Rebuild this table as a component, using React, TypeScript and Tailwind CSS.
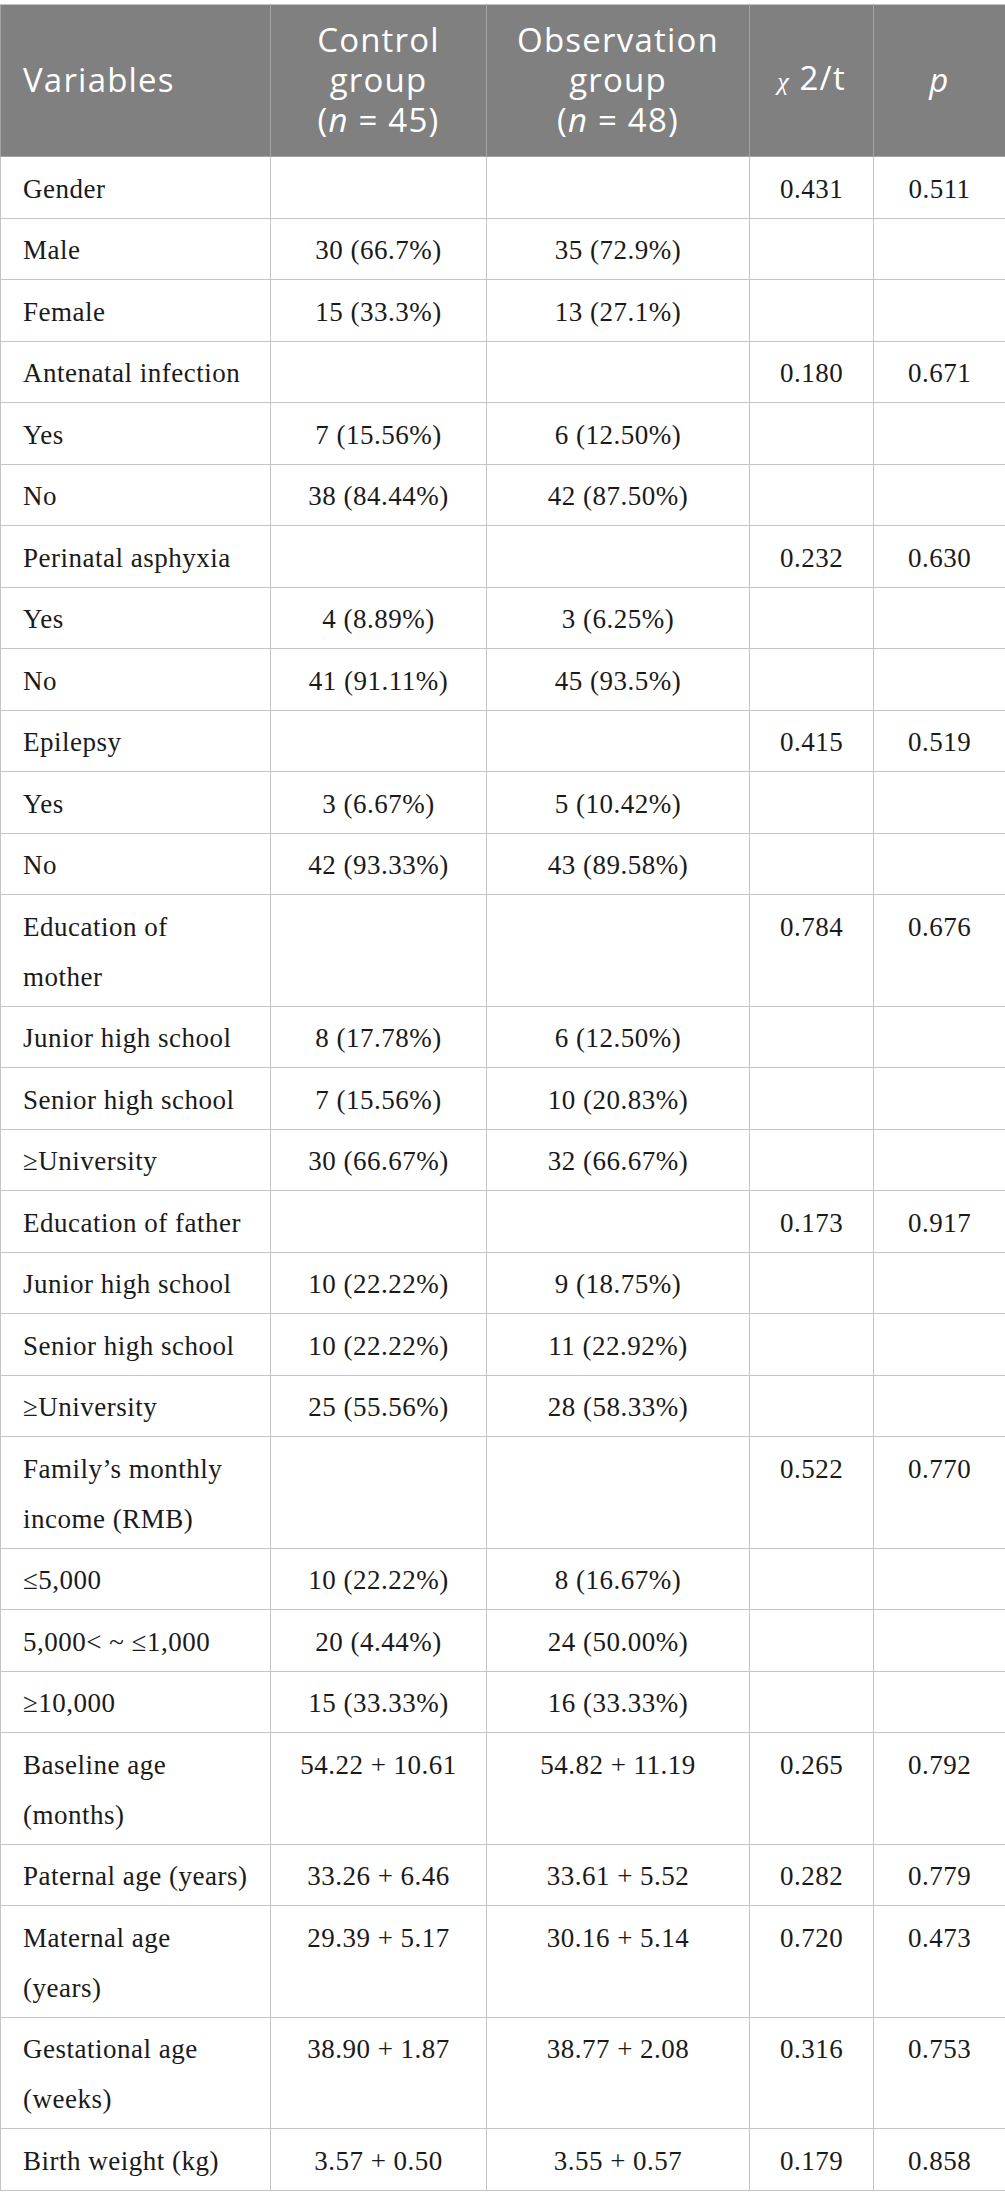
const rows: [string, string, string, string, string][] = [
  ["Gender", "", "", "0.431", "0.511"],
  ["Male", "30 (66.7%)", "35 (72.9%)", "", ""],
  ["Female", "15 (33.3%)", "13 (27.1%)", "", ""],
  ["Antenatal infection", "", "", "0.180", "0.671"],
  ["Yes", "7 (15.56%)", "6 (12.50%)", "", ""],
  ["No", "38 (84.44%)", "42 (87.50%)", "", ""],
  ["Perinatal asphyxia", "", "", "0.232", "0.630"],
  ["Yes", "4 (8.89%)", "3 (6.25%)", "", ""],
  ["No", "41 (91.11%)", "45 (93.5%)", "", ""],
  ["Epilepsy", "", "", "0.415", "0.519"],
  ["Yes", "3 (6.67%)", "5 (10.42%)", "", ""],
  ["No", "42 (93.33%)", "43 (89.58%)", "", ""],
  ["Education of\nmother", "", "", "0.784", "0.676"],
  ["Junior high school", "8 (17.78%)", "6 (12.50%)", "", ""],
  ["Senior high school", "7 (15.56%)", "10 (20.83%)", "", ""],
  ["≥University", "30 (66.67%)", "32 (66.67%)", "", ""],
  ["Education of father", "", "", "0.173", "0.917"],
  ["Junior high school", "10 (22.22%)", "9 (18.75%)", "", ""],
  ["Senior high school", "10 (22.22%)", "11 (22.92%)", "", ""],
  ["≥University", "25 (55.56%)", "28 (58.33%)", "", ""],
  ["Family’s monthly\nincome (RMB)", "", "", "0.522", "0.770"],
  ["≤5,000", "10 (22.22%)", "8 (16.67%)", "", ""],
  ["5,000< ~ ≤1,000", "20 (4.44%)", "24 (50.00%)", "", ""],
  ["≥10,000", "15 (33.33%)", "16 (33.33%)", "", ""],
  ["Baseline age\n(months)", "54.22 + 10.61", "54.82 + 11.19", "0.265", "0.792"],
  ["Paternal age (years)", "33.26 + 6.46", "33.61 + 5.52", "0.282", "0.779"],
  ["Maternal age\n(years)", "29.39 + 5.17", "30.16 + 5.14", "0.720", "0.473"],
  ["Gestational age\n(weeks)", "38.90 + 1.87", "38.77 + 2.08", "0.316", "0.753"],
  ["Birth weight (kg)", "3.57 + 0.50", "3.55 + 0.57", "0.179", "0.858"],
]

function Lines({ text }: { text: string }) {
  const parts = text.split("\n")
  return (
    <>
      {parts.map((p, i) => (
        <span key={i} className="block">
          {p || "\u00a0"}
        </span>
      ))}
    </>
  )
}

export default function App() {
  const th =
    "border border-[#a3a3a3] border-t-[#c4c4c4] px-[22px] pt-[15px] pb-[16px] align-middle font-normal leading-[40px] whitespace-nowrap"
  const td =
    "border border-[#c4c4c4] pt-[6.5px] pb-[4px] align-top leading-[50px] whitespace-nowrap"

  return (
    <div className="w-[1005px] bg-white pt-[4px]">
      <table className="w-[1005px] table-fixed border-collapse">
        <colgroup>
          <col className="w-[270px]" />
          <col className="w-[216px]" />
          <col className="w-[263px]" />
          <col className="w-[124px]" />
          <col className="w-[132px]" />
        </colgroup>
        <thead>
          <tr className="bg-[#808080] text-white font-['Open_Sans',sans-serif] text-[33px] tracking-[1.2px]">
            <th className={`${th} text-left`}>Variables</th>
            <th className={`${th} text-center px-0`}>
              Control
              <br />
              group
              <br />(<i>n</i> = 45)
            </th>
            <th className={`${th} text-center px-0`}>
              Observation
              <br />
              group
              <br />(<i>n</i> = 48)
            </th>
            <th className={`${th} text-center px-0`}>
              <span className="font-['Liberation_Serif',serif] text-[26px] italic">χ</span> 2/t
            </th>
            <th className={`${th} text-center px-0`}>
              <i>p</i>
            </th>
          </tr>
        </thead>
        <tbody className="font-['Liberation_Serif',serif] text-[27px] tracking-[0.5px] text-[#1a1a1a]">
          {rows.map((r, i) => (
            <tr key={i}>
              <td className={`${td} pl-[22px] pr-[10px] text-left`}>
                <Lines text={r[0]} />
              </td>
              <td className={`${td} text-center`}>{r[1]}</td>
              <td className={`${td} text-center`}>{r[2]}</td>
              <td className={`${td} text-center`}>{r[3]}</td>
              <td className={`${td} text-center`}>{r[4]}</td>
            </tr>
          ))}
        </tbody>
      </table>
    </div>
  )
}
